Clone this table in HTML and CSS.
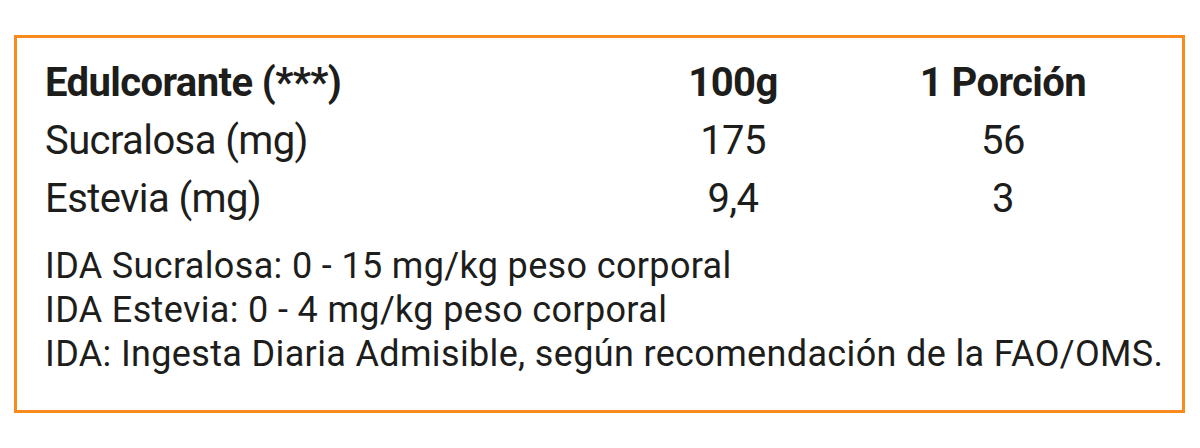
FILE: index.html
```
<!DOCTYPE html>
<html lang="es">
<head>
<meta charset="utf-8">
<link rel="stylesheet" href="styles.css">
</head>
<body>
<div class="page">
  <section class="panel">
    <div class="table">
      <div class="cell head name">Edulcorante (***)</div>
      <div class="cell head num">100g</div>
      <div class="cell head num">1 Porción</div>
      <div class="cell name">Sucralosa (mg)</div>
      <div class="cell num">175</div>
      <div class="cell num">56</div>
      <div class="cell name">Estevia (mg)</div>
      <div class="cell num">9,4</div>
      <div class="cell num">3</div>
    </div>
    <div class="notes">
      <p>IDA Sucralosa: 0 - 15 mg/kg peso corporal</p>
      <p>IDA Estevia: 0 - 4 mg/kg peso corporal</p>
      <p>IDA: Ingesta Diaria Admisible, según recomendación de la FAO/OMS.</p>
    </div>
  </section>
</div>
</body>
</html>
```
FILE: styles.css
```
html, body {
  margin: 0;
  padding: 0;
  background: #ffffff;
}
.page {
  padding: 35px 0 0 14px;
}
.panel {
  box-sizing: border-box;
  width: 1171px;
  height: 378px;
  border: 3px solid #fb8a1c;
  padding: 16px 44px 0 28px;
  font-family: Roboto, "Liberation Sans", sans-serif;
  color: #1d1d1b;
}
.table {
  display: grid;
  grid-template-columns: 1fr 270px 270px;
}
.cell {
  font-size: 40px;
  line-height: 58px;
  letter-spacing: -0.6px;
  white-space: nowrap;
}
.head {
  font-weight: 700;
}
.num {
  text-align: center;
}
.notes {
  margin-top: 16px;
}
.notes p {
  margin: 0;
  font-size: 36px;
  line-height: 44px;
  letter-spacing: 0.35px;
  white-space: nowrap;
}
```
